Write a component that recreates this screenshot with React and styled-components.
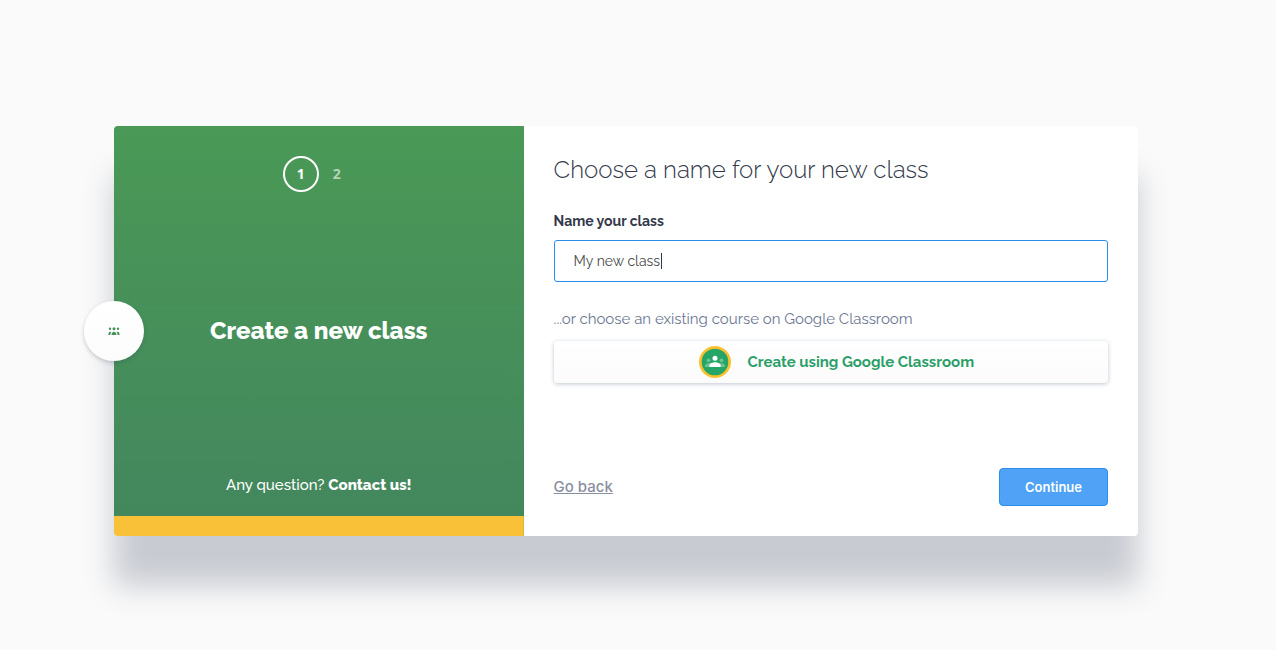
import { useLayoutEffect, useRef, useState } from 'react'
import styled, { createGlobalStyle, keyframes } from 'styled-components'

const GlobalStyle = createGlobalStyle`
    * {
        box-sizing: border-box;
    }
    body {
        margin: 0;
        background: #fafafa;
        color: #32394a;
        font-family: Raleway, Lato, sans-serif;
        font-size: 15px;
        line-height: 20px;
    }
`

const Page = styled.main`
    display: flex;
    align-items: center;
    justify-content: center;
    min-height: 100vh;
    padding: 12px 24px 0 0;
`
const Card = styled.section`
    position: relative;
    display: grid;
    grid-template-columns: 2fr 3fr;
    width: 100%;
    max-width: 1024px;
    min-height: 410px;
    background: #fff;
    border-radius: 4px;
    box-shadow: 0 50px 30px rgba(50, 62, 93, .25);
`
const Badge = styled.div`
    position: absolute;
    top: 50%;
    left: 0;
    transform: translate(-50%, -50%);
    display: flex;
    align-items: center;
    justify-content: center;
    width: 60px;
    height: 60px;
    border-radius: 50%;
    color: #459159;
    background: linear-gradient(#fff, #fcfcfd);
    box-shadow: 0 2px 4px rgba(50, 62, 93, .25);
`
const Side = styled.aside`
    display: grid;
    grid-template-rows: 1fr auto 1fr;
    justify-items: center;
    padding: 30px 20px;
    color: #fff;
    border-radius: 4px 0 0 4px;
    background:
        linear-gradient(#f9c137, #f9c137) bottom / 100% 20px no-repeat,
        linear-gradient(#4a9956, #43865e);
`
const Steps = styled.ol`
    display: flex;
    margin: 0;
    padding: 0;
    list-style: none;
`
const Step = styled.li`
    display: flex;
    align-items: center;
    justify-content: center;
    width: 36px;
    height: 36px;
    border: 2px solid ${({ $active }) => $active ? '#fff' : 'transparent'};
    border-radius: 50%;
    color: ${({ $active }) => $active ? '#fff' : 'rgba(255, 255, 255, .6)'};
    font-family: 'Open Sans', sans-serif;
    font-size: 14px;
    font-weight: 700;
`
const SideTitle = styled.h1`
    margin: 0;
    font-size: 24px;
    font-weight: 800;
    line-height: 32px;
`
const Question = styled.p`
    align-self: end;
    margin: 0 0 11px;
    font-weight: 500;
`
const ContactLink = styled.a`
    color: inherit;
    font-weight: 800;
    text-decoration: none;
`
const Form = styled.form`
    display: flex;
    flex-direction: column;
    padding: 28px 30px 30px;
`
const Title = styled.h2`
    margin: 0 0 25px;
    font-size: 24px;
    font-weight: 300;
    line-height: 32px;
`
const Label = styled.label`
    margin-bottom: 9px;
    font-size: 14px;
    font-weight: 700;
`
const Field = styled.div`
    position: relative;
    display: flex;
`
const Input = styled.input`
    flex: 1;
    height: 42px;
    padding: 0 19px;
    border: 1px solid #2a8cec;
    border-radius: 3px;
    outline: none;
    color: #4a4a4a;
    font: inherit;
    font-size: 14px;
    caret-color: transparent;
`
const blink = keyframes`
    50% { opacity: 0; }
`
const Caret = styled.span`
    position: absolute;
    top: 13px;
    width: 1px;
    height: 16px;
    background: #32394a;
    pointer-events: none;
    animation: ${blink} 4s steps(1) infinite;
`
const Hint = styled.p`
    margin: 27px 0 12px;
    color: #6b7794;
`
const GoogleButton = styled.button`
    display: flex;
    align-items: center;
    justify-content: center;
    gap: 16px;
    height: 42px;
    padding: 0 20px 0 32px;
    border: none;
    border-radius: 4px;
    color: #2b9f68;
    background: linear-gradient(#fff, #fbfbfc);
    box-shadow: 0 1px 4px rgba(50, 62, 93, .3);
    font: inherit;
    font-weight: 700;
    cursor: pointer;
`
const Actions = styled.div`
    display: flex;
    align-items: center;
    justify-content: space-between;
    margin-top: auto;
`
const BackLink = styled.a`
    color: #8a90a0;
    font-family: Inter, sans-serif;
    font-weight: 500;
`
const ContinueButton = styled.button`
    height: 38px;
    padding: 0 25px;
    border: 1px solid #2a8cec;
    border-radius: 4px;
    color: #fff;
    background: #4fa2f5;
    font-family: Inter, sans-serif;
    font-size: 13px;
    font-weight: 600;
    cursor: pointer;
`

const GroupIcon = () => (
    <svg width="12" height="8" viewBox="0 0 12 8" fill="currentColor" aria-hidden="true">
        <circle cx="2" cy="1.700" r="1.200" />
        <circle cx="6" cy="1.700" r="1.500" />
        <circle cx="10" cy="1.700" r="1.200" />
        <path d="M.4 8c0-2 .7-3.200 2.200-3.200.3 0 .6.1.8.2C2.700 5.800 2.400 6.900 2.300 8z" />
        <path d="M11.600 8c0-2-.7-3.200-2.200-3.200-.3 0-.6.1-.8.2.7.8 1 1.900 1.100 3z" />
        <path d="M3.500 8C3.600 6 4.500 4.700 6 4.700S8.400 6 8.500 8z" />
    </svg>
)

const ClassroomLogo = () => (
    <svg width="32" height="32" viewBox="0 0 32 32" aria-hidden="true">
        <circle cx="16" cy="16" r="16" fill="#fbc02d" />
        <circle cx="16" cy="16" r="13.3" fill="#25a566" />
        <g fill="#6cc297">
            <circle cx="9.5" cy="14.3" r="1.9" />
            <circle cx="22.5" cy="14.3" r="1.9" />
            <path d="M6 21v-1.3c0-1.700 2.200-2.500 4-2.500h12c1.800 0 4 .8 4 2.500V21z" />
        </g>
        <circle cx="16" cy="12.200" r="2.500" fill="#fff" />
        <path d="M10.400 21v-1.400c0-2.200 3.400-3.300 5.600-3.300s5.600 1.100 5.600 3.300V21z" fill="#fff" />
    </svg>
)

const App = () => {
    const nameInput = useRef(null)
    const [name, setName] = useState('My new class')
    const [caretLeft, setCaretLeft] = useState(20)

    useLayoutEffect(() => {
        const style = getComputedStyle(nameInput.current)
        const context = document.createElement('canvas').getContext('2d')
        context.font = `${style.fontWeight} ${style.fontSize} ${style.fontFamily}`
        setCaretLeft(20 + Math.round(context.measureText(name).width))
    }, [name])

    return (
        <>
            <GlobalStyle />
            <Page>
                <Card>
                    <Side>
                        <Steps>
                            <Step $active aria-current="step">1</Step>
                            <Step>2</Step>
                        </Steps>
                        <SideTitle>Create a new class</SideTitle>
                        <Question>Any question? <ContactLink href="#contact">Contact us!</ContactLink></Question>
                    </Side>
                    <Form onSubmit={(e) => e.preventDefault()}>
                        <Title>Choose a name for your new class</Title>
                        <Label htmlFor="class-name">Name your class</Label>
                        <Field>
                            <Input
                                id="class-name"
                                ref={nameInput}
                                type="text"
                                value={name}
                                onChange={(e) => setName(e.target.value)}
                                autoFocus
                            />
                            <Caret style={{ left: caretLeft }} />
                        </Field>
                        <Hint>...or choose an existing course on Google Classroom</Hint>
                        <GoogleButton type="button">
                            <ClassroomLogo />
                            Create using Google Classroom
                        </GoogleButton>
                        <Actions>
                            <BackLink href="#back">Go back</BackLink>
                            <ContinueButton type="submit">Continue</ContinueButton>
                        </Actions>
                    </Form>
                    <Badge>
                        <GroupIcon />
                    </Badge>
                </Card>
            </Page>
        </>
    )
}

export default App
